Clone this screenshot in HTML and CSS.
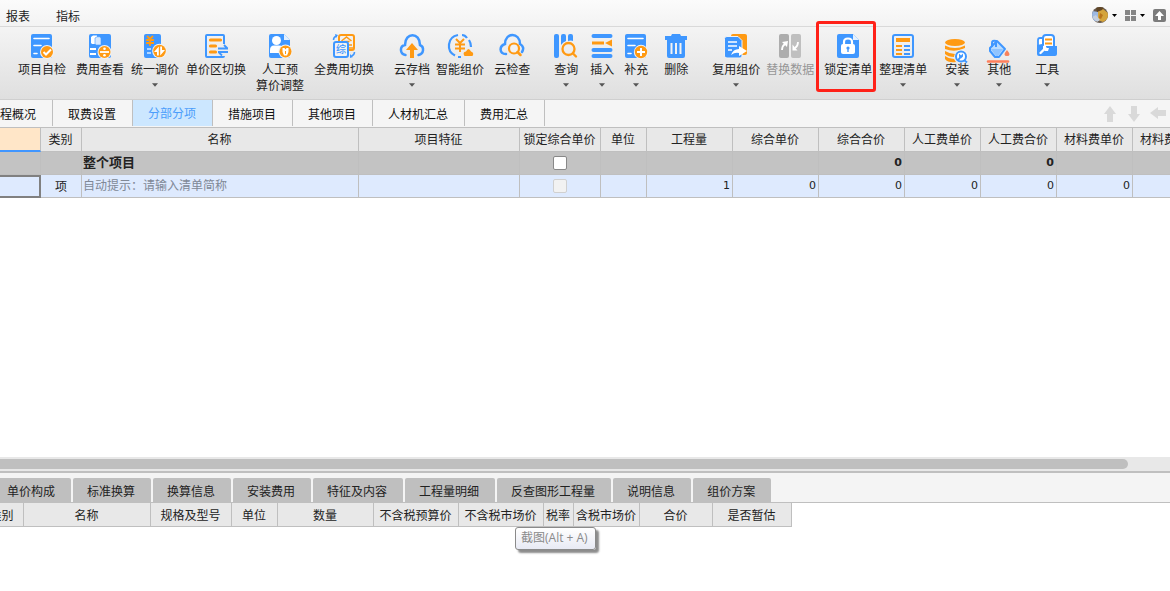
FILE: index.html
```html
<!DOCTYPE html>
<html lang="zh-CN">
<head>
<meta charset="utf-8">
<meta name="viewport" content="width=device-width, initial-scale=1">
<title>分部分项</title>
<link rel="stylesheet" href="styles.css">
</head>
<body>
<div class="app">
  <header class="menubar">
    <nav class="menu">
      <button type="button">报表</button>
      <button type="button">指标</button>
    </nav>
    <div class="window-tools">
      <button type="button" class="split" aria-label="账户">
        <svg width="16" height="16" viewBox="0 0 16 16"><defs><clipPath id="face"><circle cx="8" cy="8" r="8"/></clipPath></defs><g clip-path="url(#face)"><path fill="#66584c" d="M0 0h16v16H0z"/><path fill="#9db9e2" d="M0 4l7 1v9H0z"/><path fill="#d4a43c" d="M6 3l5-1 5 4v6l-5 3-5-2z"/><path fill="#b8741c" d="M8 6l3 2-2 4-2-1z"/><path fill="#c5cfdd" d="M0 10l4-2 4 5-3 2z"/><path fill="#5f4526" d="M4 0h8l-2 3-5 2z"/></g></svg>
        <svg class="tri dark" width="5" height="3" viewBox="0 0 5 3"><path d="M0 0h5L2.500 3z"/></svg>
      </button>
      <button type="button" class="split" aria-label="布局">
        <svg width="11" height="11" viewBox="0 0 11 11" fill="#858585"><path d="M0 0h5v5H0zM6 0h5v5H6zM0 6h5v5H0zM6 6h5v5H6z"/></svg>
        <svg class="tri dark" width="5" height="3" viewBox="0 0 5 3"><path d="M0 0h5L2.500 3z"/></svg>
      </button>
      <button type="button" class="split" aria-label="收起功能区">
        <svg width="13" height="13" viewBox="0 0 13 13"><rect width="13" height="13" rx="2" fill="#7b7b7b"/><path fill="#fff" d="M6.500 2L11 7H8v4H5V7H2z"/></svg>
      </button>
    </div>
  </header>

  <div class="ribbon" role="toolbar">
    <button type="button" class="tool">
      <svg class="icon" viewBox="0 0 24 24"><rect x="1" width="21" height="24" rx="2" fill="#3f97ff"/><path stroke="#fff" stroke-width="1.600" stroke-linecap="round" d="M4 4.500h15M4 11.500h7M4 19.500h3"/><circle cx="17" cy="18" r="7" fill="#f2f2f2"/><circle cx="17" cy="18" r="6" fill="#ff9a13"/><path fill="none" stroke="#fff" stroke-width="2" d="M13.500 18l2.500 2.500 5-5"/></svg>
      <span>项目自检</span>
    </button>
    <button type="button" class="tool g10">
      <svg class="icon" viewBox="0 0 24 24"><rect x="1" width="22" height="24" rx="2" fill="#3f97ff"/><path fill="#fff" d="M3 3l2-1.500h4V10H4L3 9z"/><path fill="#d5e8ff" stroke="#3f97ff" stroke-width=".6" d="M7 4l2-1.200h2.500L13 4v7H8l-1-1z"/><path stroke="#fff" stroke-width="2" d="M2 15h6M2 20h6"/><circle cx="16.500" cy="18" r="7" fill="#f2f2f2"/><circle cx="16.500" cy="18" r="6" fill="#ff9a13"/><path stroke="#fff" stroke-width="1.800" d="M12 18h9"/><circle cx="16.500" cy="14.800" r="1.300" fill="#fff"/><circle cx="16.500" cy="21.200" r="1.300" fill="#fff"/></svg>
      <span>费用查看</span>
    </button>
    <button type="button" class="tool g7">
      <svg class="icon" viewBox="0 0 24 24"><rect x="1" width="17" height="24" rx="2" fill="#3f97ff"/><path fill="none" stroke="#ff9a13" stroke-width="1.800" d="M4 2l3 3 3-3M3 6h8M3 9h8M7 5v7"/><path stroke="#d9ebff" stroke-width="1.600" d="M4 15h4M4 19h4"/><circle cx="16.500" cy="17" r="7.300" fill="#f2f2f2"/><circle cx="16.500" cy="17" r="6.300" fill="#ff9a13"/><path fill="#fff" d="M15.800 12.500v9H14v-3.500h-3zM17.200 21.500v-9H19V16h3z"/></svg>
      <span>统一调价</span>
      <svg class="tri" width="5" height="3" viewBox="0 0 5 3"><path d="M0 0h5L2.500 3z"/></svg>
    </button>
    <button type="button" class="tool g7">
      <svg class="icon" viewBox="0 0 24 24"><path fill="none" stroke="#3f97ff" stroke-width="2" d="M20 10V2q0-1-1-1H3Q2 1 2 2v20q0 1 1 1h16q1 0 1-1"/><path stroke="#ff9a13" stroke-width="3.200" stroke-linecap="round" d="M6.500 6h10M6.500 12h5M6.500 18h5"/><path fill="none" stroke="#3f97ff" stroke-width="1.800" d="M14 14.500h10M20 11l3.500 3.500M24 18H14M18 21.500L14.500 18"/></svg>
      <span>单价区切换</span>
    </button>
    <button type="button" class="tool g10">
      <svg class="icon" viewBox="0 0 24 24"><path fill="#3f97ff" d="M3 0h13l6 6v16q0 2-2 2H3q-2 0-2-2V2q0-2 2-2z"/><path fill="#e2f0ff" d="M16 0l6 6h-6z"/><circle cx="8.500" cy="6.500" r="4.500" fill="#fff"/><path fill="#fff" d="M2 19v-3q0-4.500 4-4.500h5q5 0 5 4.500v3z"/><circle cx="17.500" cy="17.500" r="7" fill="#f2f2f2"/><circle cx="17.500" cy="17.500" r="6" fill="#ff9a13"/><path fill="#fff" d="M14.500 14h2l1 1.500 1-1.500h2v4l-1.500 3.500h-3L14.500 18z"/><path stroke="#ff9a13" d="M17.500 17v3"/></svg>
      <span>人工预<br>算价调整</span>
    </button>
    <button type="button" class="tool g10">
      <svg class="icon" viewBox="0 0 24 24"><rect x="7" y="1" width="15" height="15" rx="2" fill="none" stroke="#ff9a13" stroke-width="2"/><path fill="none" stroke="#ff9a13" stroke-width="1.600" d="M9.500 7l5-4 5 4M12 7.500h5.500M17 11h3M17 14h4"/><rect x="2" y="8" width="14" height="15" rx="2" fill="#f2f2f2" stroke="#3f97ff" stroke-width="2"/><text class="glyph" x="4" y="19" font-size="10" fill="#3f97ff">综</text><path fill="none" stroke="#3f97ff" stroke-width="1.500" d="M1.500 6q0-3 3-4M22.500 18q0 3-3 4"/><path fill="#3f97ff" d="M3 0l3 1-2 3zM18 24v-4l3 3z"/></svg>
      <span>全费用切换</span>
    </button>
    <button type="button" class="tool g20">
      <svg class="icon" viewBox="0 0 24 24"><path fill="none" stroke="#3f97ff" stroke-width="2.500" stroke-linecap="round" d="M5.500 21C-.5 20-.5 12 5 11 5-2 20-2 20 11c4.500 2 4 9-1.500 10"/><path fill="#ff9a13" d="M12 9l6 7h-4v8h-4v-8H6z"/></svg>
      <span>云存档</span>
      <svg class="tri" width="5" height="3" viewBox="0 0 5 3"><path d="M0 0h5L2.500 3z"/></svg>
    </button>
    <button type="button" class="tool g6">
      <svg class="icon" viewBox="0 0 24 24"><path fill="none" stroke="#3f97ff" stroke-width="2.200" d="M7 21.500C-2 17-1 3 10 1M14 1q3 0 5 3M21 6q2 3 2 7M10 23h3"/><path fill="none" stroke="#ff9a13" stroke-width="2" d="M8 5l4 4 4-4M7 10.500h10M7 14.500h10M12 8v10"/><path fill="#ff9a13" d="M16.500 22q-2.500-4 1.500-4.500 2.500-5 5 0 3.500 1 1.500 4.500z"/></svg>
      <span>智能组价</span>
    </button>
    <button type="button" class="tool g10">
      <svg class="icon" viewBox="0 0 24 24"><path fill="none" stroke="#3f97ff" stroke-width="2.500" stroke-linecap="round" d="M6 20C-1 20-1 12 5 10 5-2 20-2 20 10c3.500 2 4 5 2 8"/><circle cx="14" cy="14.500" r="5" fill="#f2f2f2" stroke="#ff9a13" stroke-width="2.200"/><path stroke="#ff9a13" stroke-width="2.500" stroke-linecap="round" d="M17.500 18l3 3"/></svg>
      <span>云检查</span>
    </button>
    <button type="button" class="tool g24">
      <svg class="icon" viewBox="0 0 24 24"><rect width="5" height="24" rx="2" fill="#3f97ff"/><path fill="#3f97ff" d="M7 2q0-2 2-2h1q2 0 2 2v5q-3 1-5 4zM14 2q0-2 2-2h1q2 0 2 2v5q-2-1-5 0z"/><circle cx="14.500" cy="15" r="6" fill="none" stroke="#ff9a13" stroke-width="2.300"/><path stroke="#ff9a13" stroke-width="2.400" stroke-linecap="round" d="M19 19.500l3 3"/></svg>
      <span>查询</span>
      <svg class="tri" width="5" height="3" viewBox="0 0 5 3"><path d="M0 0h5L2.500 3z"/></svg>
    </button>
    <button type="button" class="tool g12">
      <svg class="icon" viewBox="0 0 24 24"><path stroke="#3f97ff" stroke-width="4" stroke-linecap="round" d="M3.500 2h17M3.500 16h17M3.500 22h17"/><path fill="#ff9a13" d="M2 7.500h12v3H2zM15 9l7-3.500v7z"/></svg>
      <span>插入</span>
      <svg class="tri" width="5" height="3" viewBox="0 0 5 3"><path d="M0 0h5L2.500 3z"/></svg>
    </button>
    <button type="button" class="tool g10">
      <svg class="icon" viewBox="0 0 24 24"><rect x="1" width="21" height="24" rx="2" fill="#3f97ff"/><path stroke="#fff" stroke-width="1.600" stroke-linecap="round" d="M4 4.500h15M4 11.500h7M4 19.500h3"/><circle cx="17" cy="18" r="7.200" fill="#f2f2f2"/><circle cx="17" cy="18" r="6.200" fill="#ff9a13"/><path stroke="#fff" stroke-width="2" d="M13 18h8M17 14v8"/></svg>
      <span>补充</span>
      <svg class="tri" width="5" height="3" viewBox="0 0 5 3"><path d="M0 0h5L2.500 3z"/></svg>
    </button>
    <button type="button" class="tool g16">
      <svg class="icon" viewBox="0 0 24 24"><path fill="#3f97ff" d="M8 0h8l1 2h6v4h-2v16q0 2-2 2H5q-2 0-2-2V6H1V2h6z"/><path stroke="#f2f2f2" stroke-width="2" d="M7.500 9v11M12 9v11M16.500 9v11"/></svg>
      <span>删除</span>
    </button>
    <button type="button" class="tool g24">
      <svg class="icon" viewBox="0 0 24 24"><rect x="7" width="16" height="21" rx="2" fill="#ff9a13"/><path fill="#3f97ff" stroke="#f2f2f2" d="M3 2.500h11l4 4V22q0 2-2 2H3q-2.500 0-2.500-2V4.500q0-2 2.500-2z"/><path stroke="#fff" stroke-width="1.600" d="M4 8h9M4 12h9M4 16h4"/><path fill="#fff" d="M7 21q2-6 8-6v-3l8 5-8 5v-3q-4-1-8 2z"/></svg>
      <span>复用组价</span>
      <svg class="tri" width="5" height="3" viewBox="0 0 5 3"><path d="M0 0h5L2.500 3z"/></svg>
    </button>
    <button type="button" class="tool g6" disabled>
      <svg class="icon" viewBox="0 0 24 24"><rect x="1" width="10" height="24" rx="2" fill="#adadad"/><rect x="13" width="10" height="24" rx="2" fill="#bfbfbf"/><path fill="none" stroke="#fff" stroke-width="1.800" d="M4 16q0-4 3-6M20 8q0 4-3 6"/><path fill="#fff" d="M4 8l6-1-1 6zM14.500 10.500v6h5z"/></svg>
      <span>替换数据</span>
    </button>
    <button type="button" class="tool g10 marked">
      <svg class="icon" viewBox="0 0 24 24"><path fill="#3f97ff" d="M3 0h14l6 6v16q0 2-2 2H3q-2 0-2-2V2q0-2 2-2z"/><path fill="#e4f1ff" d="M17 0l6 6h-6z"/><rect x="5" y="10" width="14" height="10" rx="2" fill="#fff"/><path fill="none" stroke="#fff" stroke-width="2.200" d="M8 11V8q0-3.500 4-3.500T16 8v3"/><circle cx="12" cy="14" r="1.600" fill="#3f97ff"/><path stroke="#3f97ff" stroke-width="1.400" d="M12 14v4"/></svg>
      <span>锁定清单</span>
    </button>
    <button type="button" class="tool g7">
      <svg class="icon" viewBox="0 0 24 24"><rect x="2" y="1" width="20" height="22" rx="2" fill="none" stroke="#3f97ff" stroke-width="2"/><rect x="5" y="4" width="14" height="4" fill="#ff9a13"/><path stroke="#ff9a13" stroke-width="2" d="M5 12h6M5 16h6M5 20h6"/><path stroke="#3f97ff" stroke-width="2" d="M13 12h6M13 16h6M13 20h6"/></svg>
      <span>整理清单</span>
      <svg class="tri" width="5" height="3" viewBox="0 0 5 3"><path d="M0 0h5L2.500 3z"/></svg>
    </button>
    <button type="button" class="tool g18">
      <svg class="icon" viewBox="0 -5 24 24"><ellipse cx="10" cy="3.500" rx="10" ry="3.500" fill="#ff9a13"/><path fill="#ff9a13" d="M0 6.500q10 5 20 0V9q-10 5-20 1zM0 12q5 3 10 3l-1 3q-6 0-9-3zM0 17q4 3 9 3l2 3q-8 1-11-3z"/><circle cx="16.500" cy="17.500" r="7" fill="#f2f2f2"/><circle cx="16" cy="17.500" r="5" fill="#fff" stroke="#3f97ff" stroke-width="2"/><path stroke="#3f97ff" stroke-width="2" d="M12.500 22l3-4M19 21l3 2.500"/><path fill="#3f97ff" d="M14 14.500l2 2 2-2v3l-2 2-2-2z"/></svg>
      <span>安装</span>
      <svg class="tri" width="5" height="3" viewBox="0 0 5 3"><path d="M0 0h5L2.500 3z"/></svg>
    </button>
    <button type="button" class="tool g18">
      <svg class="icon" viewBox="0 -5 24 24"><path fill="#b9dcff" stroke="#3f97ff" stroke-width="2" stroke-linejoin="round" d="M10 2l8 8-6 8H8l-5-6V9z"/><path fill="#8fc4ff" d="M4 10h12l-5 7H9z"/><path fill="none" stroke="#3f97ff" stroke-width="2" d="M5 8V4q0-3 4-2v6"/><path fill="#f8815b" d="M20 11q5 6 0 6t0-6z"/><path stroke="#ff7f5c" stroke-width="2.500" stroke-linecap="round" d="M1 22.500h20"/></svg>
      <span>其他</span>
      <svg class="tri" width="5" height="3" viewBox="0 0 5 3"><path d="M0 0h5L2.500 3z"/></svg>
    </button>
    <button type="button" class="tool g24">
      <svg class="icon" viewBox="0 0 24 24"><path fill="#fff" stroke="#3f97ff" stroke-width="1.800" d="M3 14V6q0-2 2-2h3v8"/><path fill="#fff" stroke="#3f97ff" stroke-width="2" d="M8 14V4q0-3 3-3h5q3 0 3 3v10z"/><path stroke="#ff9a13" stroke-width="2" d="M10 5.500h7M10 9.500h7"/><path fill="#3f97ff" d="M2 11l5-1 2 2h13v8q0 2-2 2H4q-2 0-2-2z"/><path stroke="#fff" stroke-width="2.400" stroke-linecap="round" d="M5.500 19l4-4"/><path fill="#fff" d="M8 15v-3l3-1v2l1 1h2l-1 3h-3z"/></svg>
      <span>工具</span>
      <svg class="tri" width="5" height="3" viewBox="0 0 5 3"><path d="M0 0h5L2.500 3z"/></svg>
    </button>
  </div>

  <div class="tabbar">
    <div class="tabs" role="tablist">
      <button type="button" role="tab">工程概况</button>
      <button type="button" role="tab">取费设置</button>
      <button type="button" role="tab" aria-selected="true">分部分项</button>
      <button type="button" role="tab">措施项目</button>
      <button type="button" role="tab">其他项目</button>
      <button type="button" role="tab">人材机汇总</button>
      <button type="button" role="tab">费用汇总</button>
    </div>
    <div class="moves">
      <button type="button" aria-label="上移"><svg width="16" height="16" viewBox="0 0 16 16"><path d="M8 0l6 8h-3v8H5V8H2z"/></svg></button>
      <button type="button" aria-label="下移"><svg width="16" height="16" viewBox="0 0 16 16"><path d="M8 16l6-8h-3V0H5v8H2z"/></svg></button>
      <button type="button" aria-label="左移"><svg width="16" height="16" viewBox="0 0 16 16"><path d="M0 7l8-6v3h8v6H8v3z"/></svg></button>
    </div>
  </div>

  <main class="sheet">
    <table class="grid">
      <colgroup><col class="w41"><col class="w41"><col class="w277"><col class="w161"><col class="w81"><col class="w46"><col class="w86"><col class="w86"><col class="w86"><col class="w76"><col class="w76"><col class="w76"><col class="w76"></colgroup>
      <thead>
        <tr><th class="current"></th><th>类别</th><th>名称</th><th>项目特征</th><th>锁定综合单价</th><th>单位</th><th>工程量</th><th>综合单价</th><th>综合合价</th><th>人工费单价</th><th>人工费合价</th><th>材料费单价</th><th>材料费合价</th></tr>
      </thead>
      <tbody>
        <tr class="total"><td></td><td></td><td>整个项目</td><td></td><td class="mid"><input type="checkbox" aria-label="锁定综合单价：整个项目"></td><td></td><td></td><td></td><td class="num">0</td><td></td><td class="num">0</td><td></td><td></td></tr>
        <tr class="item"><td class="focus"></td><td class="mid">项</td><td class="hint">自动提示：请输入清单简称</td><td></td><td class="mid"><input type="checkbox" disabled aria-label="锁定综合单价：项"></td><td></td><td class="num">1</td><td class="num">0</td><td class="num">0</td><td class="num">0</td><td class="num">0</td><td class="num">0</td><td></td></tr>
      </tbody>
    </table>
  </main>
  <div class="scroll"><div class="thumb"></div></div>

  <section class="detail">
    <div class="subtabs" role="tablist">
      <button type="button" role="tab">单价构成</button>
      <button type="button" role="tab">标准换算</button>
      <button type="button" role="tab">换算信息</button>
      <button type="button" role="tab">安装费用</button>
      <button type="button" role="tab">特征及内容</button>
      <button type="button" role="tab">工程量明细</button>
      <button type="button" role="tab">反查图形工程量</button>
      <button type="button" role="tab">说明信息</button>
      <button type="button" role="tab">组价方案</button>
    </div>
    <div class="parts">
      <table class="grid shifted">
        <colgroup><col class="w43"><col class="w127"><col class="w81"><col class="w46"><col class="w96"><col class="w85"><col class="w85"><col class="w30"><col class="w66"><col class="w73"><col class="w79"></colgroup>
        <thead>
          <tr><th>类别</th><th>名称</th><th>规格及型号</th><th>单位</th><th>数量</th><th>不含税预算价</th><th>不含税市场价</th><th>税率</th><th>含税市场价</th><th>合价</th><th>是否暂估</th></tr>
        </thead>
      </table>
      <div class="tip" role="tooltip">截图(Alt + A)</div>
    </div>
  </section>
</div>
</body>
</html>
```

FILE: styles.css
```css
* {
  box-sizing: border-box;
}

body {
  margin: 0;
  background: #fff;
  color: #222;
  font: 12px/16px "Noto Sans CJK SC", "Noto Sans", sans-serif;
}

button {
  margin: 0;
  padding: 0;
  border: 0;
  background: none;
  color: inherit;
  font: inherit;
  white-space: nowrap;
}

svg {
  display: block;
}

.app {
  display: flex;
  flex-direction: column;
  min-height: 100vh;
  overflow: hidden;
}

/* menu bar */
.menubar {
  display: flex;
  justify-content: space-between;
  height: 27px;
  padding: 4px 4px 0 6px;
  border-bottom: 1px solid #d9d9d9;
  background: linear-gradient(#fbfbfb, #f3f3f3);
}

.menu {
  display: flex;
  gap: 26px;
  padding-top: 2px;
}

.window-tools {
  display: flex;
  align-items: center;
  gap: 8px;
}

.split {
  display: flex;
  align-items: center;
  gap: 4px;
}

.tri {
  fill: #555;
}

.tri.dark {
  fill: #000;
}

/* ribbon */
.ribbon {
  display: flex;
  align-items: flex-start;
  height: 73px;
  padding: 7px 0 0 18px;
  border-bottom: 1px solid #cfcfcf;
  background: linear-gradient(#f4f4f4, #dfdfdf);
}

.tool {
  position: relative;
  display: flex;
  flex: none;
  flex-direction: column;
  align-items: center;
  gap: 3px;
}

.tool .tri {
  width: 6px;
  height: 4px;
  margin-top: 3px;
}

.tool:disabled {
  color: #969696;
}

.icon {
  width: 24px;
  height: 24px;
  overflow: visible;
}

.glyph {
  font-weight: 500;
}

.g6 { margin-left: 6px; }
.g7 { margin-left: 7px; }
.g10 { margin-left: 10px; }
.g12 { margin-left: 12px; }
.g16 { margin-left: 16px; }
.g18 { margin-left: 18px; }
.g20 { margin-left: 20px; }
.g24 { margin-left: 24px; }

.marked::after {
  position: absolute;
  inset: -13px -4px -15px -8px;
  border: 3px solid #ff2118;
  border-radius: 3px;
  content: "";
}

/* page tabs */
.tabbar {
  display: flex;
  justify-content: space-between;
  height: 28px;
  border-bottom: 1px solid #bfbfbf;
  background: #f5f5f5;
}

.tabs {
  display: flex;
  height: 26px;
  margin-left: -27px;
}

.tabs button {
  padding: 2px 16px 0 15px;
  border-right: 1px solid #bfbfbf;
  color: #111;
}

.tabs [aria-selected="true"] {
  padding-top: 0;
  background: #cce7ff;
  color: #4a9dfb;
}

.moves {
  display: flex;
  align-items: center;
  gap: 8px;
  padding-right: 4px;
  fill: #d9d9d9;
}

/* tables */
.sheet {
  flex: 1;
  overflow: hidden;
}

.grid {
  width: 0;
  border-collapse: separate;
  border-spacing: 0;
  table-layout: fixed;
}

.grid th,
.grid td {
  height: 23px;
  padding: 0 3px 2px 1px;
  border: solid #bfbfbf;
  border-width: 0 1px 1px 0;
  white-space: nowrap;
}

.grid th {
  height: 24px;
  padding: 0 1px 1px 0;
  background: #e8e8e8;
  font-weight: 400;
}

.grid .current {
  border-bottom: 2px solid #4096ff;
  background: #ffe6c8;
}

.grid .mid {
  padding: 0 0 1px;
  text-align: center;
}

.grid .num {
  padding: 0 2px 0 0;
  font-family: "DejaVu Sans", sans-serif;
  font-size: 11px;
  text-align: right;
}

.total td {
  background: #c3c3c3;
  font-size: 13px;
  font-weight: 700;
}

.item td {
  background: #deeafe;
}

.item .hint {
  color: #808896;
}

.item .focus {
  border: solid #808080;
  border-width: 2px 2px 2px 0;
}

.grid input {
  display: block;
  width: 14px;
  height: 14px;
  margin: 0 auto;
  border: 1px solid #888;
  border-radius: 2px;
  appearance: none;
  background: #fff;
}

.grid input:disabled {
  border-color: #d0d0d0;
  background: #f2f2f2;
}

.w30 { width: 30px; }
.w41 { width: 41px; }
.w43 { width: 43px; }
.w46 { width: 46px; }
.w66 { width: 66px; }
.w73 { width: 73px; }
.w76 { width: 76px; }
.w79 { width: 79px; }
.w81 { width: 81px; }
.w85 { width: 85px; }
.w86 { width: 86px; }
.w96 { width: 96px; }
.w127 { width: 127px; }
.w161 { width: 161px; }
.w277 { width: 277px; }

/* horizontal scroll bar and splitter */
.scroll {
  padding: 2px 42px 2px 0;
  border-bottom: 2px solid #bfbfbf;
  background: #e8e8e8;
}

.thumb {
  height: 10px;
  border-radius: 0 5px 5px 0;
  background: #bfbfbf;
}

/* detail pane */
.subtabs {
  display: flex;
  gap: 2px;
  height: 30px;
  padding-top: 5px;
  border-bottom: 1px solid #bfbfbf;
  background: #f4f4f4;
}

.subtabs button {
  padding: 2px 16px 0 14px;
  border-radius: 2px 2px 0 0;
  background: #bfbfbf;
}

.subtabs button:first-child {
  margin-left: -7px;
}

.parts {
  position: relative;
  min-height: 88px;
}

.shifted {
  margin-left: -19px;
}

.shifted th {
  padding-bottom: 0;
}

.tip {
  position: absolute;
  top: 24px;
  left: 515px;
  padding: 2px 7px 3px 5px;
  border: 1px solid #8a8a8a;
  border-radius: 3px;
  background: linear-gradient(#fff, #e8eaf4);
  box-shadow: 3px 3px 2px #8c8c8c;
  color: #8a8a8a;
  font-family: "Open Sans", "Noto Sans CJK SC", sans-serif;
}
```
